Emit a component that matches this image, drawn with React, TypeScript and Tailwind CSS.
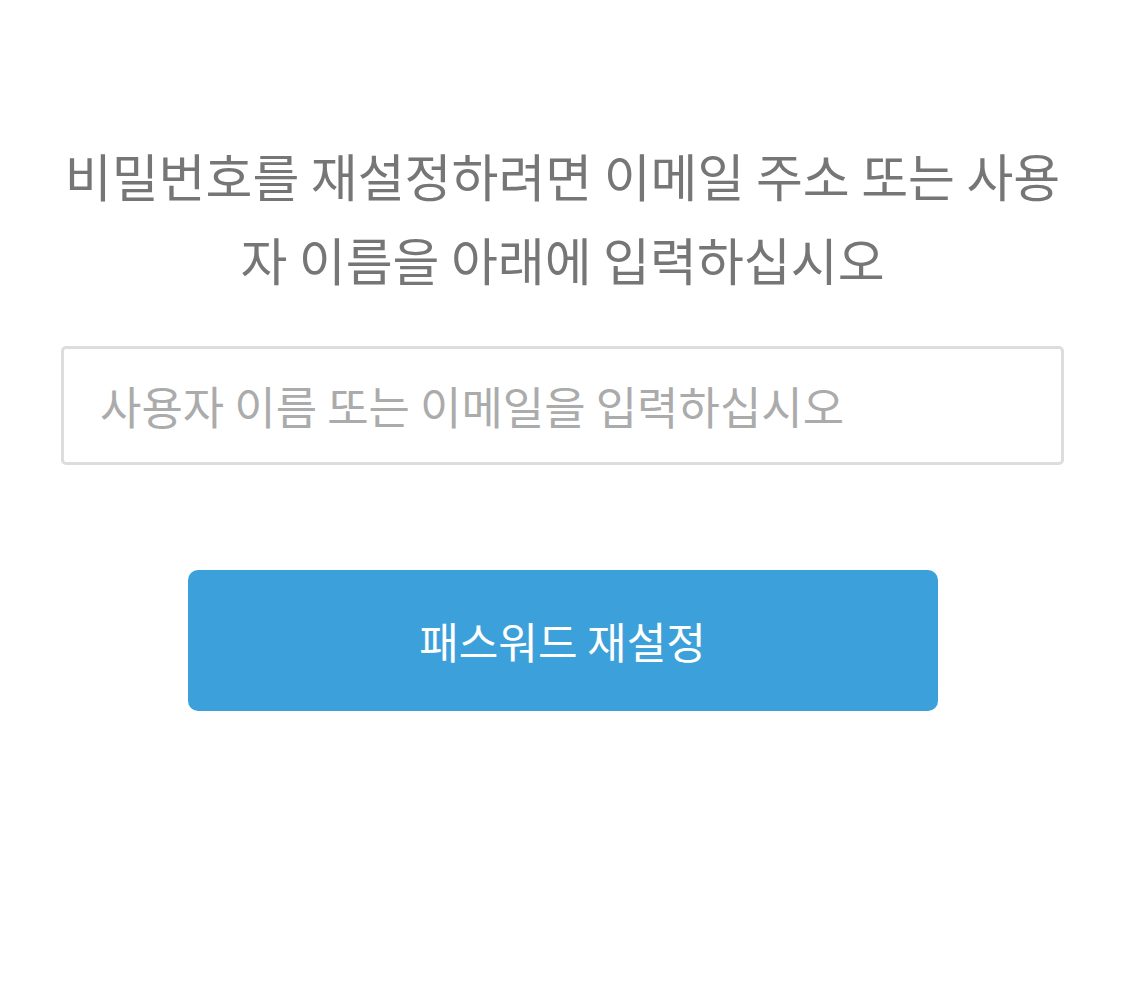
export default function App() {
  return (
    <div
      className="w-[1125px] h-[1006px] bg-white flex flex-col items-center px-[61px]"
      style={{ fontFamily: '"Noto Sans CJK KR", "Noto Sans", sans-serif' }}
    >
      <p className="mt-[133px] text-center text-[51px] leading-[84px] text-[#767676] whitespace-nowrap">
        비밀번호를 재설정하려면 이메일 주소 또는 사용
        <br />자 이름을 아래에 입력하십시오
      </p>
      <input
        className="mt-[45px] w-full h-[119px] border-[3px] border-[#dddddd] rounded-[5px] px-[36px] text-[45px] text-[#444] placeholder:text-[#ababab] outline-none"
        placeholder="사용자 이름 또는 이메일을 입력하십시오"
      />
      <button className="mt-[105px] w-[750px] h-[141px] rounded-[10px] bg-[#3ca1da] text-white text-[43px]">
        패스워드 재설정
      </button>
    </div>
  );
}
